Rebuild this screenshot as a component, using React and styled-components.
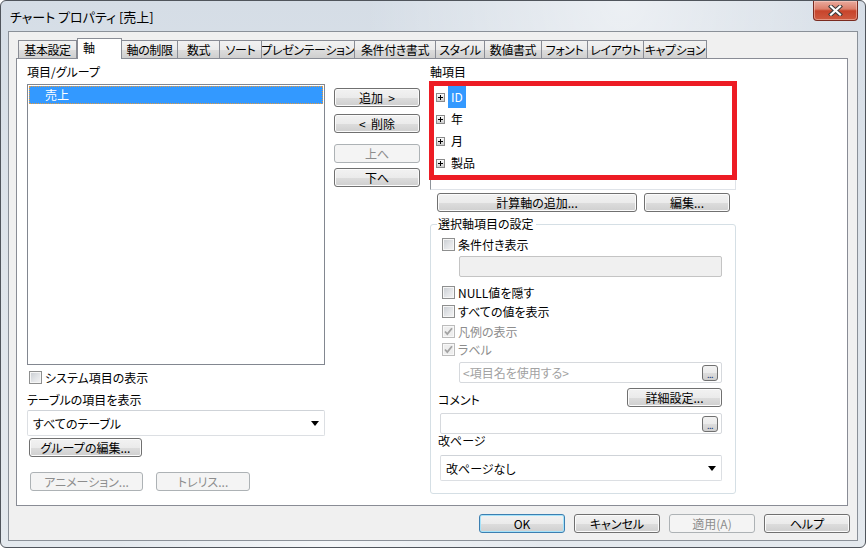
import React from "react";
import styled, { createGlobalStyle, css } from "styled-components";

const GlobalStyle = createGlobalStyle`
  html, body {
    margin: 0;
    padding: 0;
  }
  body {
    width: 866px;
    height: 548px;
    overflow: hidden;
    background: #fff;
    font-family: "Noto Sans CJK JP", "Liberation Sans", sans-serif;
    font-size: 12px;
    font-feature-settings: "palt";
    color: #000;
  }
  * {
    box-sizing: border-box;
  }
`;

const tabs = [
  ["基本設定", 59],
  ["軸", 45],
  ["軸の制限", 56],
  ["数式", 42],
  ["ソート", 42],
  ["プレゼンテーション", 93],
  ["条件付き書式", 81],
  ["スタイル", 49],
  ["数値書式", 57],
  ["フォント", 46],
  ["レイアウト", 56],
  ["キャプション", 63],
];

const axisItems = ["ID", "年", "月", "製品"];

const PlusBox = () => (
  <svg width="9" height="9" viewBox="0 0 9 9">
    <defs>
      <linearGradient id="pb" x1="0" y1="0" x2="0" y2="1">
        <stop offset="0" stopColor="#ffffff" />
        <stop offset="1" stopColor="#c9c9c9" />
      </linearGradient>
    </defs>
    <rect x="0.5" y="0.5" width="8" height="8" fill="url(#pb)" stroke="#8a8a8a" />
    <path d="M2 4.5h5M4.5 2v5" stroke="#000" strokeWidth="1" />
  </svg>
);

const CheckMark = () => (
  <svg width="11" height="11" viewBox="0 0 11 11">
    <path d="M2 5.5l2.3 2.6L9 2.2" fill="none" stroke="#a3a3a3" strokeWidth="1.8" />
  </svg>
);

const DownArrow = () => (
  <svg width="8" height="5" viewBox="0 0 8 5">
    <path d="M0 0h8L4 5z" fill="#000" />
  </svg>
);

const CloseGlyph = () => (
  <svg width="15" height="11" viewBox="0 0 15 11">
    <path d="M3 1.5l9 8M12 1.5l-9 8" stroke="#3b3b3b" strokeWidth="4.2" strokeLinecap="square" />
    <path d="M3 1.5l9 8M12 1.5l-9 8" stroke="#fff" strokeWidth="2.2" strokeLinecap="square" />
  </svg>
);

const Window = styled.div`
  width: 866px;
  height: 548px;
  display: flex;
  flex-direction: column;
  border: 1px solid #50555c;
  border-radius: 6px;
  padding: 0 7px 6px 7px;
  background: radial-gradient(ellipse 30% 60% at 72% 0%, rgba(255, 255, 255, 0.55), transparent),
    radial-gradient(ellipse 25% 50% at 38% 100%, rgba(255, 255, 255, 0.6), transparent),
    linear-gradient(180deg, #d5dde6 0%, #dfe5eb 50%, #e4e9ee 100%);
`;

const TitleBar = styled.div`
  height: 30px;
  display: flex;
  align-items: flex-start;
  justify-content: space-between;
`;

const Title = styled.div`
  margin: 7px 0 0 2px;
  font-size: 13px;
  line-height: 17px;
  color: #000;
`;

const CloseButton = styled.div`
  width: 45px;
  height: 20px;
  display: flex;
  align-items: center;
  justify-content: center;
  border: 1px solid #7a2b20;
  border-top: none;
  border-radius: 0 0 4px 4px;
  background: linear-gradient(180deg, #e9ab9e 0%, #dc7f6b 42%, #c7442b 52%, #cf5a40 100%);
  box-shadow: inset 0 0 0 1px rgba(255, 220, 210, 0.45);
`;

const Client = styled.div`
  flex: 1;
  display: flex;
  flex-direction: column;
  border: 1px solid #8a9098;
  background: #f0f0f0;
  padding: 6px 9px 7px 7px;
`;

const TabStrip = styled.div`
  height: 20px;
  display: flex;
  align-items: flex-end;
  padding-left: 2px;
  position: relative;
  z-index: 1;
`;

const Tab = styled.div`
  width: ${(p) => p.$w}px;
  height: 18px;
  display: flex;
  align-items: center;
  justify-content: center;
  overflow: hidden;
  white-space: nowrap;
  letter-spacing: -0.4px;
  border: 1px solid #898c95;
  border-bottom: none;
  border-left-width: 0;
  background: linear-gradient(180deg, #f2f2f2 0%, #ebebeb 50%, #dddddd 51%, #cfcfcf 100%);
  line-height: 14px;

  &:first-child {
    border-left-width: 1px;
  }

  ${(p) =>
    p.$active &&
    css`
      height: 21px;
      margin-bottom: -1px;
      border-left-width: 1px;
      justify-content: flex-start;
      padding: 0 0 2px 5px;
      background: #fff;
    `}
`;

const Panel = styled.div`
  height: 448px;
  display: flex;
  border: 1px solid #898c95;
  background: #fff;
  padding: 6px 0 0 10px;
`;

const Column = styled.div`
  width: ${(p) => p.$w}px;
  display: flex;
  flex-direction: column;
`;

const MidColumn = styled.div`
  width: 86px;
  display: flex;
  flex-direction: column;
  margin: 23px 10px 0 9px;
`;

const Label = styled.div`
  height: 14px;
  line-height: 14px;
  margin-top: ${(p) => p.$mt || 0}px;
  white-space: nowrap;
`;

const ListBox = styled.div`
  height: 281px;
  margin-top: 5px;
  border: 1px solid #828790;
  padding: 1px;
`;

const ListRow = styled.div`
  height: 18px;
  line-height: 16px;
  padding-left: 15px;
  background: #3399ff;
  color: #fff;
  border: 1px dotted #e89a3c;
`;

const CheckRow = styled.div`
  height: 14px;
  display: flex;
  align-items: center;
  gap: 3px;
  margin-top: ${(p) => p.$mt || 0}px;
  margin-left: ${(p) => p.$ml || 0}px;
  color: ${(p) => (p.$disabled ? "#8d8d8d" : "#000")};
  white-space: nowrap;
`;

const CheckBox = styled.span`
  width: 13px;
  height: 13px;
  flex: none;
  display: flex;
  align-items: center;
  justify-content: center;
  border: 1px solid #8e8f8f;
  background: linear-gradient(135deg, #c8ccd1 0%, #e3e5e8 55%, #f4f4f4 100%);
  box-shadow: inset 0 0 0 1px #f6f6f6;

  ${(p) =>
    p.$disabled &&
    css`
      border-color: #bcbcbc;
      background: #eeeeee;
      box-shadow: inset 0 0 0 1px #f8f8f8;
    `}
`;

const Select = styled.div`
  height: 26px;
  display: flex;
  align-items: center;
  justify-content: space-between;
  margin-top: ${(p) => p.$mt || 0}px;
  margin-left: ${(p) => p.$ml || 0}px;
  padding: 0 5px 0 5px;
  border: 1px solid #dcdfe3;
  border-top-color: #cfd3d8;
  border-radius: 2px;
  background: #fff;
`;

const Button = styled.button`
  width: ${(p) => p.$w}px;
  height: 19px;
  flex: none;
  margin: ${(p) => p.$mt || 0}px 0 0 ${(p) => p.$ml || 0}px;
  padding: 0;
  font-family: inherit;
  font-size: 12px;
  font-feature-settings: "palt";
  line-height: 16px;
  color: #000;
  border: 1px solid #707070;
  border-radius: 3px;
  background: linear-gradient(180deg, #f2f2f2 0%, #ebebeb 50%, #dddddd 51%, #cfcfcf 100%);
  box-shadow: inset 0 0 0 1px #fbfbfb;
  white-space: pre;

  &:disabled {
    color: #8d8d8d;
    border-color: #adb2b5;
    background: #f4f4f4;
    box-shadow: none;
  }

  ${(p) =>
    p.$default &&
    css`
      border-color: #3c7fb1;
      box-shadow: inset 0 0 0 1px #a6e3fa;
    `}
`;

const TreeWrap = styled.div`
  position: relative;
  margin-top: 3px;
`;

const Tree = styled.div`
  height: 108px;
  padding-top: 3px;
  border: 1px solid #dfe3e8;
  border-left-color: #8e9399;
  border-top-color: #abadb3;
  background: #fff;
`;

const TreeRow = styled.div`
  height: 22px;
  display: flex;
  align-items: center;
  padding-left: 5px;
`;

const TreeText = styled.span`
  height: 22px;
  line-height: 22px;
  margin-left: 3px;
  padding: 0 3px;
  ${(p) =>
    p.$selected &&
    css`
      background: #3399ff;
      color: #fff;
    `}
`;

const RedFrame = styled.div`
  position: absolute;
  top: -1px;
  left: -1px;
  width: 308px;
  height: 99px;
  border: 5px solid #ed1c24;
  pointer-events: none;
`;

const ButtonRow = styled.div`
  display: flex;
  gap: ${(p) => p.$gap}px;
  margin-top: ${(p) => p.$mt}px;
  margin-left: ${(p) => p.$ml}px;
`;

const GroupBox = styled.fieldset`
  margin: 5px 0 0 0;
  min-width: 0;
  padding: 0 13px 12px 7px;
  border: 1px solid #d5dfe5;
  border-radius: 3px;
  display: flex;
  flex-direction: column;
`;

const Legend = styled.legend`
  height: 14px;
  line-height: 14px;
  padding: 0 2px 0 1px;
  margin-left: -1px;
`;

const Field = styled.div`
  height: 21px;
  display: flex;
  align-items: center;
  justify-content: space-between;
  margin-top: ${(p) => p.$mt || 0}px;
  margin-left: ${(p) => p.$ml || 0}px;
  padding: 0 3px 0 3px;
  border: 1px solid #d6d9dd;
  border-radius: 2px;
  background: ${(p) => (p.$disabled ? "#f0f0f0" : "#fff")};
  ${(p) =>
    p.$disabled &&
    css`
      border-color: #c4c4c4;
    `}
`;

const Placeholder = styled.span`
  color: #a2a2a2;
  line-height: 14px;
`;

const EllipsisButton = styled.span`
  width: 16px;
  height: 16px;
  margin-left: auto;
  display: flex;
  align-items: flex-end;
  justify-content: center;
  border: 1px solid #707070;
  border-radius: 3px;
  background: linear-gradient(180deg, #f2f2f2 0%, #ebebeb 50%, #dddddd 51%, #cfcfcf 100%);
  font-size: 9px;
  line-height: 10px;
  letter-spacing: -0.5px;
  color: #1a3a78;
`;

const DetailRow = styled.div`
  height: 20px;
  display: flex;
  align-items: flex-end;
  justify-content: space-between;
  margin-top: 4px;
`;

const Footer = styled.div`
  display: flex;
  justify-content: flex-end;
  gap: 9px;
  margin: 8px -2px 0 0;
`;

export default function App() {
  return (
    <>
      <GlobalStyle />
      <Window>
        <TitleBar>
          <Title>チャート プロパティ [売上]</Title>
          <CloseButton>
            <CloseGlyph />
          </CloseButton>
        </TitleBar>
        <Client>
          <TabStrip>
            {tabs.map(([name, w]) => (
              <Tab key={name} $w={w} $active={name === "軸"}>
                {name}
              </Tab>
            ))}
          </TabStrip>
          <Panel>
            <Column $w={298}>
              <Label>項目/グループ</Label>
              <ListBox>
                <ListRow>売上</ListRow>
              </ListBox>
              <CheckRow $mt={5} $ml={2}>
                <CheckBox />
                システム項目の表示
              </CheckRow>
              <Label $mt={9}>テーブルの項目を表示</Label>
              <Select $mt={3}>
                すべてのテーブル
                <DownArrow />
              </Select>
              <Button $w={113} $mt={2} $ml={2}>
                グループの編集...
              </Button>
              <ButtonRow $gap={13} $mt={15} $ml={3}>
                <Button $w={113} disabled>
                  アニメーション...
                </Button>
                <Button $w={94} disabled>
                  トレリス...
                </Button>
              </ButtonRow>
            </Column>

            <MidColumn>
              <Button $w={86}>{"追加  >"}</Button>
              <Button $w={86} $mt={7}>
                {"<  削除"}
              </Button>
              <Button $w={86} $mt={11} disabled>
                上へ
              </Button>
              <Button $w={86} $mt={5}>
                下へ
              </Button>
            </MidColumn>

            <Column $w={306}>
              <Label>軸項目</Label>
              <TreeWrap>
                <Tree>
                  {axisItems.map((item, i) => (
                    <TreeRow key={item}>
                      <PlusBox />
                      <TreeText $selected={i === 0}>{item}</TreeText>
                    </TreeRow>
                  ))}
                </Tree>
                <RedFrame />
              </TreeWrap>
              <ButtonRow $gap={7} $mt={3} $ml={7}>
                <Button $w={200}>計算軸の追加...</Button>
                <Button $w={86}>編集...</Button>
              </ButtonRow>
              <GroupBox>
                <Legend>選択軸項目の設定</Legend>
                <CheckRow $mt={6} $ml={4}>
                  <CheckBox />
                  条件付き表示
                </CheckRow>
                <Field $mt={5} $ml={21} $disabled />
                <CheckRow $mt={8} $ml={4}>
                  <CheckBox />
                  NULL値を隠す
                </CheckRow>
                <CheckRow $mt={5} $ml={4}>
                  <CheckBox />
                  すべての値を表示
                </CheckRow>
                <CheckRow $mt={6} $ml={4} $disabled>
                  <CheckBox $disabled>
                    <CheckMark />
                  </CheckBox>
                  凡例の表示
                </CheckRow>
                <CheckRow $mt={4} $ml={4} $disabled>
                  <CheckBox $disabled>
                    <CheckMark />
                  </CheckBox>
                  ラベル
                </CheckRow>
                <Field $mt={6} $ml={21}>
                  <Placeholder>&lt;項目名を使用する&gt;</Placeholder>
                  <EllipsisButton>...</EllipsisButton>
                </Field>
                <DetailRow>
                  <Label>コメント</Label>
                  <Button $w={95}>詳細設定...</Button>
                </DetailRow>
                <Field $mt={6} $ml={2}>
                  <EllipsisButton>...</EllipsisButton>
                </Field>
                <Label>改ページ</Label>
                <Select $mt={7} $ml={2}>
                  改ページなし
                  <DownArrow />
                </Select>
              </GroupBox>
            </Column>
          </Panel>
          <Footer>
            <Button $w={86} $default>
              OK
            </Button>
            <Button $w={86}>キャンセル</Button>
            <Button $w={86} disabled>
              適用(A)
            </Button>
            <Button $w={86}>ヘルプ</Button>
          </Footer>
        </Client>
      </Window>
    </>
  );
}
